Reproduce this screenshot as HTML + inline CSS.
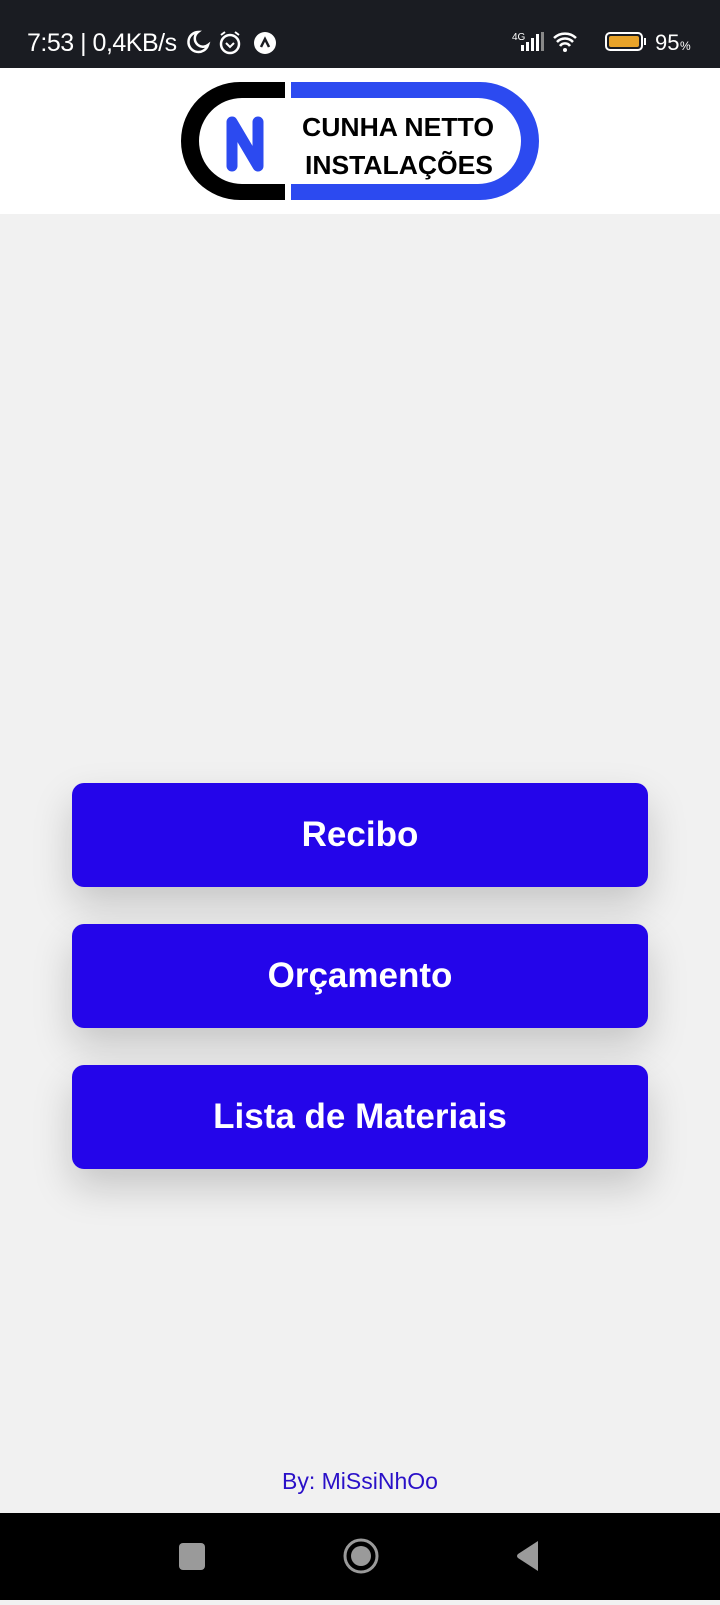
<!DOCTYPE html>
<html><head><meta charset="utf-8"><style>
*{margin:0;padding:0;box-sizing:border-box}
body{width:720px;height:1600px;background:#f1f1f1;position:relative;overflow:hidden;font-family:"Liberation Sans",sans-serif}
.sb{position:absolute;left:0;top:0;width:720px;height:68px;background:#1a1c22;color:#fff}
.hd{position:absolute;left:0;top:68px;width:720px;height:146px;background:#fff}
.btn{position:absolute;left:72px;width:576px;height:104px;background:#2405ea;border-radius:12px;color:#fff;font-weight:bold;font-size:35px;display:flex;align-items:center;justify-content:center;box-shadow:0 18px 40px rgba(0,0,0,0.18)}
.ft{position:absolute;left:0;width:720px;top:1468px;text-align:center;color:#2a10c8;font-size:23px}
.nav{position:absolute;left:0;top:1513px;width:720px;height:87px;background:#000}
</style></head><body>
<div class="sb">
<div style="position:absolute;left:27px;top:29px;font-size:25px;letter-spacing:-0.5px">7:53 | 0,4KB/s</div>
<svg style="position:absolute;left:184px;top:29px" width="95" height="28" viewBox="0 0 95 28">
<path d="M14 3a10 10 0 1 0 10 13a8 8 0 0 1-10-13z" fill="none" stroke="#fff" stroke-width="2.5"/>
<circle cx="46" cy="15" r="9" fill="none" stroke="#fff" stroke-width="2.5"/><path d="M42 14l4 4l4-4" fill="none" stroke="#fff" stroke-width="2"/><path d="M37 6l4-3M55 6l-4-3" stroke="#fff" stroke-width="2"/>
<circle cx="81" cy="14" r="11" fill="#fff"/><path d="M77 18l4-8l4 8" fill="none" stroke="#1a1c22" stroke-width="2.5"/>
</svg>
<svg style="position:absolute;left:512px;top:28px" width="180" height="28" viewBox="0 0 180 28">
<text x="0" y="12" fill="#fff" font-size="10" font-family="Liberation Sans">4G</text>
<rect x="9" y="17" width="3" height="6" fill="#fff"/><rect x="14" y="14" width="3" height="9" fill="#fff"/><rect x="19" y="10" width="3" height="13" fill="#fff"/><rect x="24" y="6" width="3" height="17" fill="#fff"/><rect x="29" y="4" width="3" height="19" fill="#888"/>
<path d="M42 10a16 16 0 0 1 22 0M45 14a11 11 0 0 1 16 0M48 18a6 6 0 0 1 10 0" fill="none" stroke="#fff" stroke-width="2.5"/><circle cx="53" cy="22" r="2" fill="#fff"/>
<rect x="94" y="5" width="36" height="17" rx="4" fill="none" stroke="#fff" stroke-width="2"/><rect x="97" y="8" width="30" height="11" rx="2" fill="#e8a32a"/><rect x="132" y="10" width="2" height="7" fill="#fff"/>
<text x="143" y="22" fill="#fff" font-size="22" font-family="Liberation Sans">95</text><text x="168" y="22" fill="#fff" font-size="12" font-family="Liberation Sans">%</text>
</svg>
</div>
<div class="hd">
<svg style="position:absolute;left:180px;top:12px" width="362" height="124" viewBox="0 0 362 124">
<path d="M105 2H60A58 58 0 0 0 60 120H105V104H62A42 42 0 0 1 62 18H105Z" fill="#000"/>
<path d="M111 2H300A58 58 0 0 1 300 120H111V104H298A42 42 0 0 0 298 18H111Z" fill="#2c4af0"/>
<path d="M52 86V42L78 86V42" fill="none" stroke="#2c4af0" stroke-width="11" stroke-linejoin="round" stroke-linecap="round"/>
<text x="122" y="56" font-family="Liberation Sans" font-weight="bold" font-size="26" fill="#000" textLength="192" lengthAdjust="spacingAndGlyphs">CUNHA NETTO</text>
<text x="125" y="94" font-family="Liberation Sans" font-weight="bold" font-size="26" fill="#000" textLength="188" lengthAdjust="spacingAndGlyphs">INSTALAÇÕES</text>
</svg>
</div>
<div class="btn" style="top:783px">Recibo</div>
<div class="btn" style="top:924px">Orçamento</div>
<div class="btn" style="top:1065px">Lista de Materiais</div>
<div class="ft">By: MiSsiNhOo</div>
<div class="nav">
<svg width="720" height="87" viewBox="0 0 720 87">
<rect x="179" y="30" width="26" height="27" rx="4" fill="#9a9a9a"/>
<circle cx="361" cy="43" r="16" fill="none" stroke="#9a9a9a" stroke-width="3"/><circle cx="361" cy="43" r="10" fill="#9a9a9a"/>
<path d="M538 28V58L518 45Q516 43 518 41Z" fill="#9a9a9a"/>
</svg>
</div>
</body></html>
